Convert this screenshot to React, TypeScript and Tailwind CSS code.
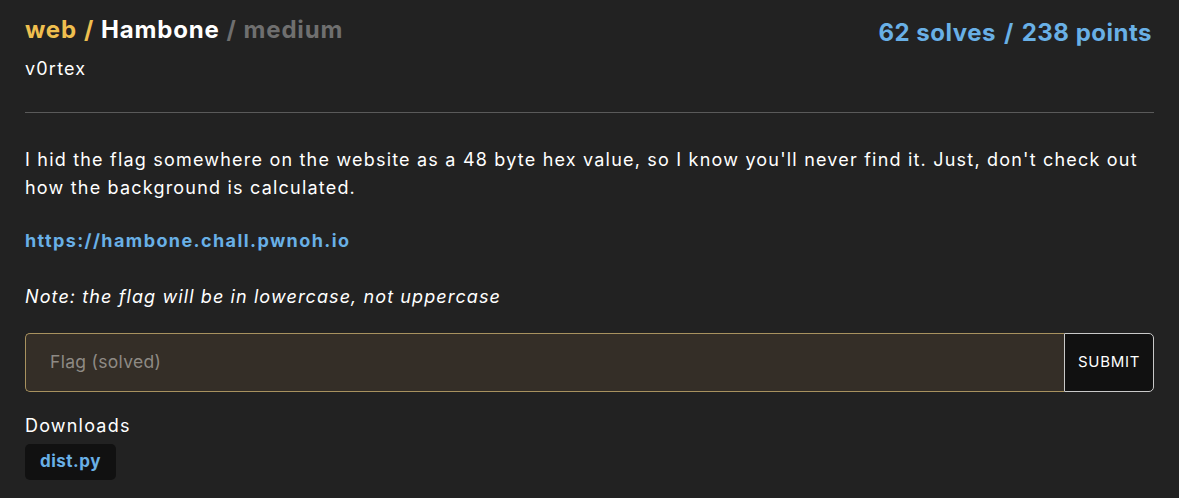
export default function App() {
  return (
    <div className="min-h-[498px] bg-[#222222] px-[25px] pt-[14px] text-white font-['Inter',sans-serif]">
      {/* Header */}
      <div className="flex items-start justify-between">
        <div>
          <h1 className="text-[24px] font-bold leading-[32px] tracking-[0.8px]">
            <span className="text-[#efbf4f]">web</span>
            <span className="mx-[7px] text-[#efbf4f]">/</span>
            <span className="text-white">Hambone</span>
            <span className="mx-[7px] text-[#6f6f6f]">/</span>
            <span className="text-[#6f6f6f]">medium</span>
          </h1>
          <p className="mt-[11px] text-[18px] leading-[24px] tracking-[1.2px]">v0rtex</p>
        </div>
        <div className="pt-[3px] pr-[2px] text-[24px] font-bold leading-[32px] tracking-[0.5px] text-[#69b0e6]">
          62 solves<span className="mx-[8px]">/</span>238 points
        </div>
      </div>

      <hr className="mt-[31px] border-0 border-t border-[#5a5a5a]" />

      {/* Description */}
      <div className="mt-[33px] text-[18px] leading-[28px] tracking-[1.2px]">
        <p>
          I hid the flag somewhere on the website as a 48 byte hex value, so I know you'll never find it. Just, don't check out how the background is calculated.
        </p>
        <p className="mt-[25px]">
          <a className="font-bold tracking-[1.4px] text-[#69b0e6]">https://hambone.chall.pwnoh.io</a>
        </p>
        <p className="mt-[28px] italic tracking-[1.1px]">Note: the flag will be in lowercase, not uppercase</p>
      </div>

      {/* Flag form */}
      <div className="mt-[22px] flex h-[59px]">
        <div className="flex flex-1 items-center rounded-l-[5px] border border-r-0 border-[#a8925f] bg-[#342e27] pl-[24px] text-[17.5px] tracking-[0.3px] text-[#8e8a84]">
          Flag (solved)
        </div>
        <button className="flex w-[90px] items-center justify-center rounded-r-[5px] border border-[#c9c9c9] bg-[#111111] text-[15px] tracking-[0.7px] text-white">
          SUBMIT
        </button>
      </div>

      {/* Downloads */}
      <p className="mt-[21px] text-[18px] leading-[26px] tracking-[1.2px]">Downloads</p>
      <div className="mt-[5px] pb-[18px]">
        <span className="inline-flex h-[36px] items-center rounded-[5px] bg-[#111111] px-[15px] text-[17px] font-bold tracking-[0.5px] text-[#69b0e6]">
          dist.py
        </span>
      </div>
    </div>
  );
}
